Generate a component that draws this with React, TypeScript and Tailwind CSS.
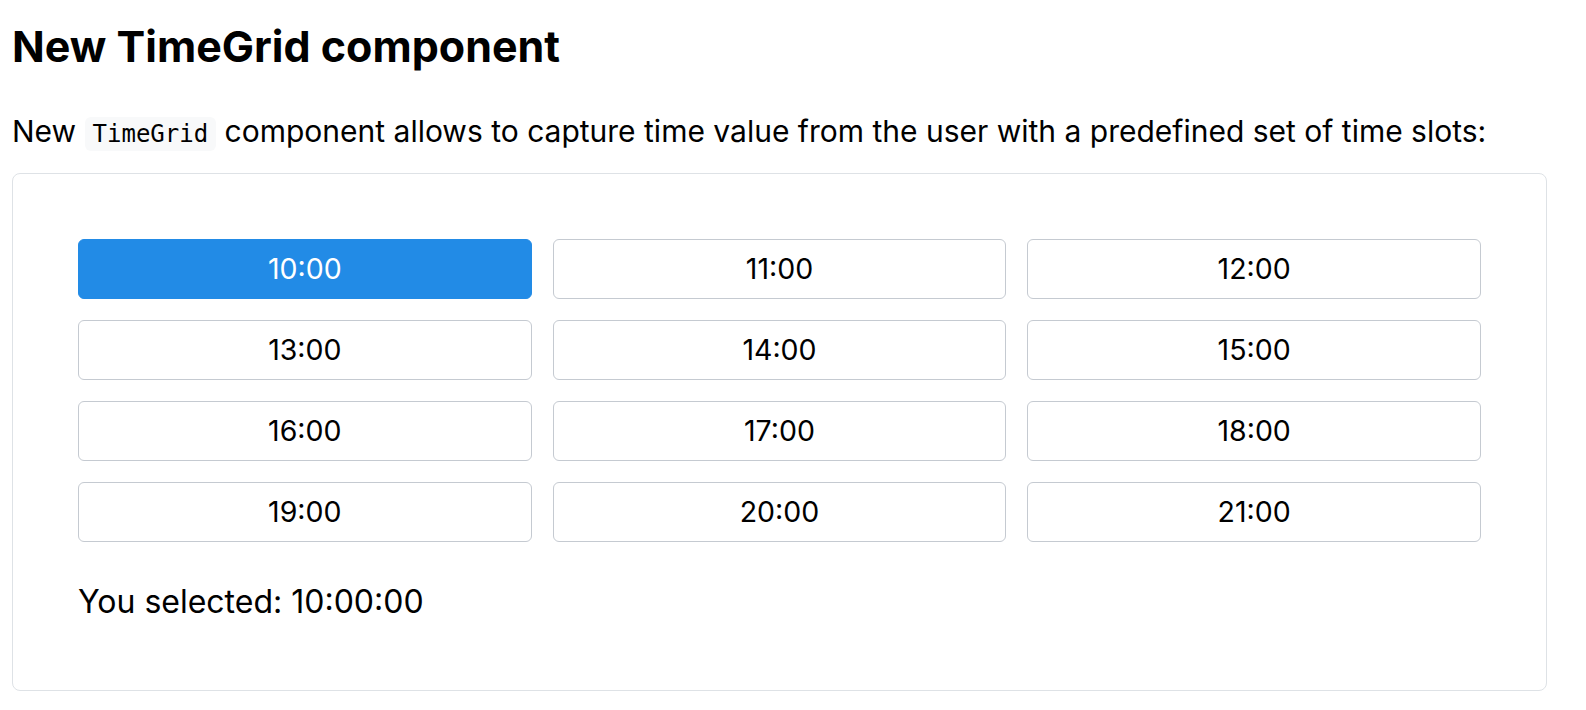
import { useState } from "react";

const slots = [
  "10:00", "11:00", "12:00",
  "13:00", "14:00", "15:00",
  "16:00", "17:00", "18:00",
  "19:00", "20:00", "21:00",
];

const App = () => {
  const [selected, setSelected] = useState("10:00");

  return (
    <div className="min-h-screen bg-white pl-3 pt-[22px] text-black font-['Inter',sans-serif]">
      <h2 className="text-[43px] font-bold leading-[48px]">
        New TimeGrid component
      </h2>
      <p className="mt-[40px] text-[30px] leading-[42px]">
        New{" "}
        <code className="rounded-md bg-[#f8f9fa] px-[8px] py-[3px] text-[24px] font-['DejaVu_Sans_Mono',monospace]">
          TimeGrid
        </code>{" "}
        component allows to capture time value from the user with a predefined set of time slots:
      </p>
      <div className="mt-[18px] w-[1535px] h-[518px] rounded-lg border border-[#dee2e6] p-[65px]">
        <div className="grid grid-cols-3 gap-x-[21px] gap-y-[21px]">
          {slots.map((slot) => {
            const active = slot === selected;
            return (
              <button
                key={slot}
                onClick={() => setSelected(slot)}
                className={
                  active
                    ? "h-[60px] rounded-md border border-[#228be6] bg-[#228be6] text-[28.5px] text-white"
                    : "h-[60px] rounded-md border border-[#c5cad1] bg-white text-[28.5px] text-black"
                }
              >
                {slot}
              </button>
            );
          })}
        </div>
        <p className="mt-[40px] text-[32px] leading-[40px]">You selected: {selected}:00</p>
      </div>
    </div>
  );
};

export default App;
